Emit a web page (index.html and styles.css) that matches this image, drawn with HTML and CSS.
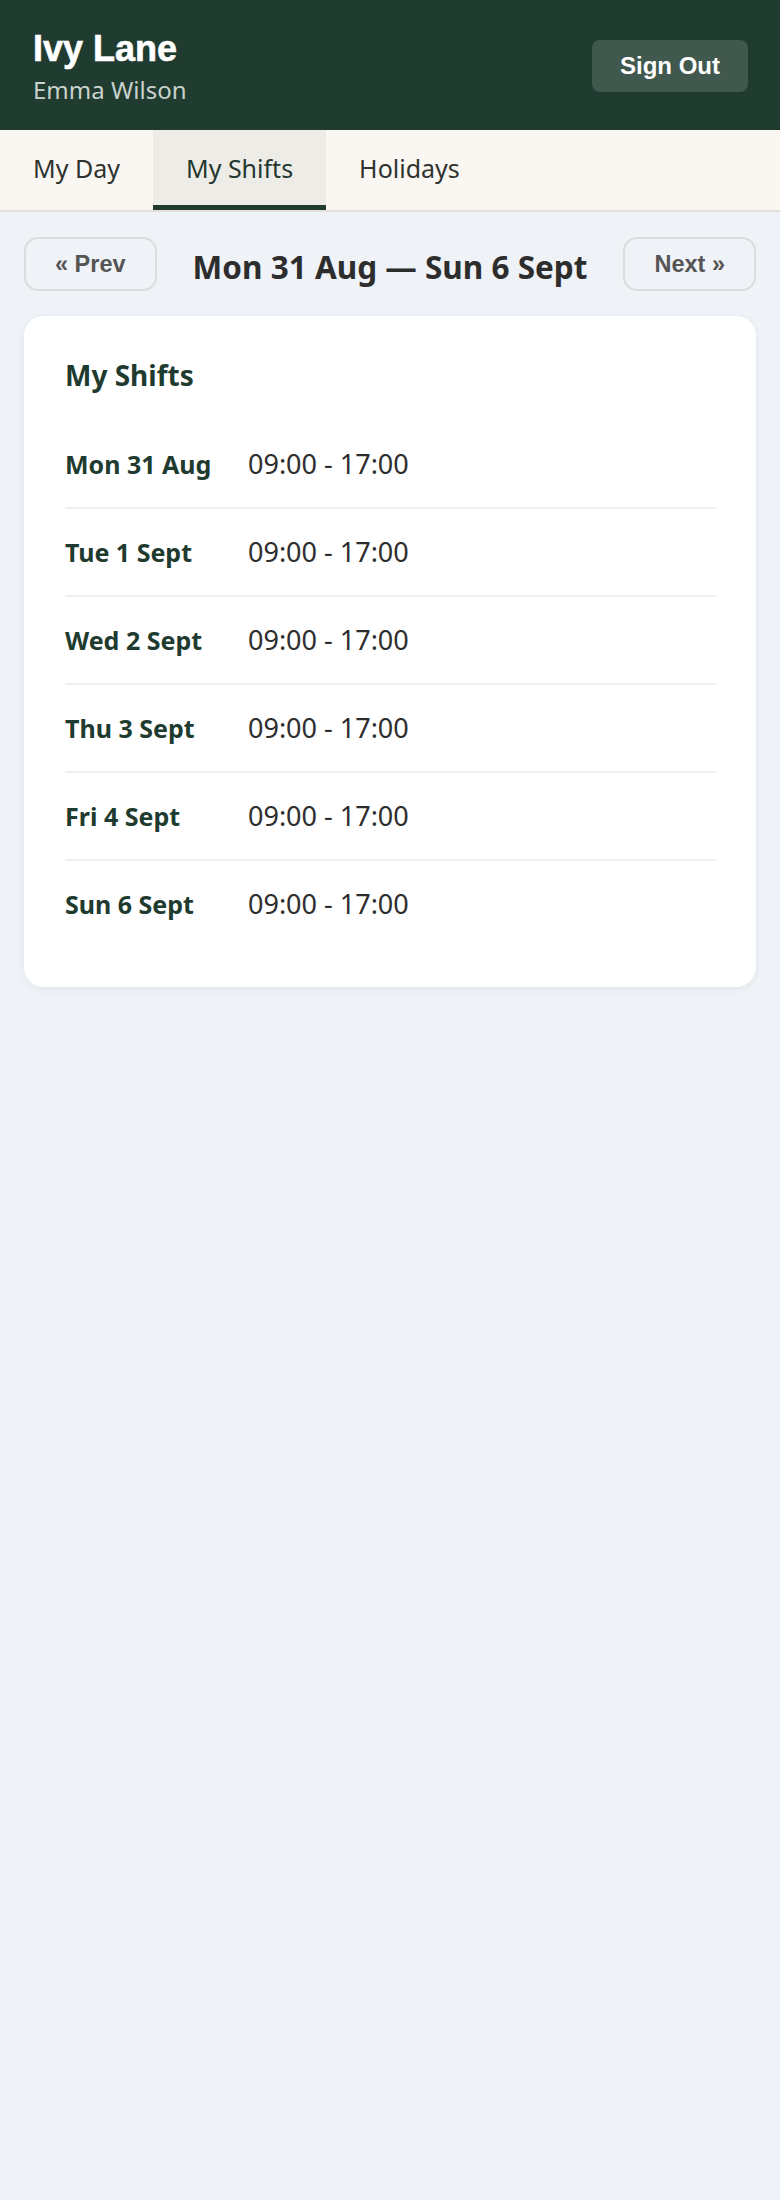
FILE: index.html
```html
<!DOCTYPE html>
<html lang="en">
<head>
<meta charset="utf-8">
<title>Ivy Lane - My Shifts</title>
<link rel="stylesheet" href="styles.css">
</head>
<body>
<header class="topbar">
  <div class="brand">
    <h1 class="brand-title">Ivy Lane</h1>
    <div class="brand-user">Emma Wilson</div>
  </div>
  <button class="signout">Sign Out</button>
</header>
<nav class="tabs">
  <a class="tab">My Day</a>
  <a class="tab tab-active">My Shifts</a>
  <a class="tab">Holidays</a>
</nav>
<main class="content">
  <div class="weeknav">
    <button class="navbtn">« Prev</button>
    <h2 class="weektitle">Mon 31 Aug — Sun 6 Sept</h2>
    <button class="navbtn">Next »</button>
  </div>
  <section class="card">
    <h3 class="card-title">My Shifts</h3>
    <div class="shift"><span class="shift-date">Mon 31 Aug</span><span class="shift-time">09:00 - 17:00</span></div>
    <div class="shift"><span class="shift-date">Tue 1 Sept</span><span class="shift-time">09:00 - 17:00</span></div>
    <div class="shift"><span class="shift-date">Wed 2 Sept</span><span class="shift-time">09:00 - 17:00</span></div>
    <div class="shift"><span class="shift-date">Thu 3 Sept</span><span class="shift-time">09:00 - 17:00</span></div>
    <div class="shift"><span class="shift-date">Fri 4 Sept</span><span class="shift-time">09:00 - 17:00</span></div>
    <div class="shift"><span class="shift-date">Sun 6 Sept</span><span class="shift-time">09:00 - 17:00</span></div>
  </section>
</main>
</body>
</html>
```
FILE: styles.css
```css
* { box-sizing: border-box; }
html, body {
  margin: 0;
  padding: 0;
}
body {
  background: #eff2f7;
  font-family: "Noto Sans", "Open Sans", sans-serif;
  min-height: 2200px;
}
.topbar {
  background: #203b30;
  height: 130px;
  padding: 29px 32px 24px 33px;
  display: flex;
  align-items: center;
  justify-content: space-between;
}
.brand-title {
  margin: 0;
  font-family: "Liberation Sans", Arial, sans-serif;
  font-weight: 700;
  font-size: 36px;
  line-height: 40px;
  color: #ffffff;
  -webkit-text-stroke: 0.6px #ffffff;
}
.brand-user {
  margin-top: 5px;
  font-size: 24px;
  line-height: 32px;
  color: #c9d2cd;
}
.signout {
  height: 52px;
  padding: 0 28px;
  border: none;
  border-radius: 8px;
  background: rgba(255, 255, 255, 0.15);
  color: #ffffff;
  font-family: "Liberation Sans", Arial, sans-serif;
  font-weight: 700;
  font-size: 24px;
  margin-bottom: 3px;
}
.tabs {
  display: flex;
  background: #faf7f2;
  border-bottom: 2px solid #e6dfd5;
}
.tab {
  display: flex;
  align-items: center;
  height: 80px;
  padding: 0 33px;
  border-bottom: 5px solid transparent;
  font-size: 25px;
  color: #2f3330;
}
.tab-active {
  background: #edece7;
  border-bottom-color: #203b30;
  color: #24382f;
}
.content {
  padding: 25px 24px;
}
.weeknav {
  display: flex;
  align-items: center;
  justify-content: space-between;
  margin-bottom: 25px;
}
.navbtn {
  height: 54px;
  padding: 0 29px;
  background: transparent;
  border: 2px solid #dcdcdc;
  border-radius: 14px;
  font-family: "Liberation Sans", Arial, sans-serif;
  font-weight: 700;
  font-size: 23.5px;
  color: #555555;
}
.weektitle {
  margin: 6px 0 0;
  font-size: 31.5px;
  font-weight: 700;
  color: #2d2d2d;
  line-height: 40px;
}
.card {
  background: #ffffff;
  border-radius: 20px;
  padding: 40px 40px 40px 41px;
  box-shadow: 0 2px 8px rgba(0, 0, 0, 0.06);
}
.card-title {
  margin: 0 0 27px;
  font-size: 28px;
  line-height: 38px;
  font-weight: 700;
  color: #1f3b2f;
}
.shift {
  display: grid;
  grid-template-columns: 159px 1fr;
  column-gap: 24px;
  align-items: baseline;
  padding: 26px 0;
  line-height: 34px;
  border-bottom: 2px solid #f0f0f0;
}
.shift:last-child {
  border-bottom: none;
}
.shift-date {
  font-size: 25px;
  font-weight: 700;
  color: #1f3b2f;
}
.shift-time {
  font-size: 27px;
  color: #2d2d2d;
}
```
